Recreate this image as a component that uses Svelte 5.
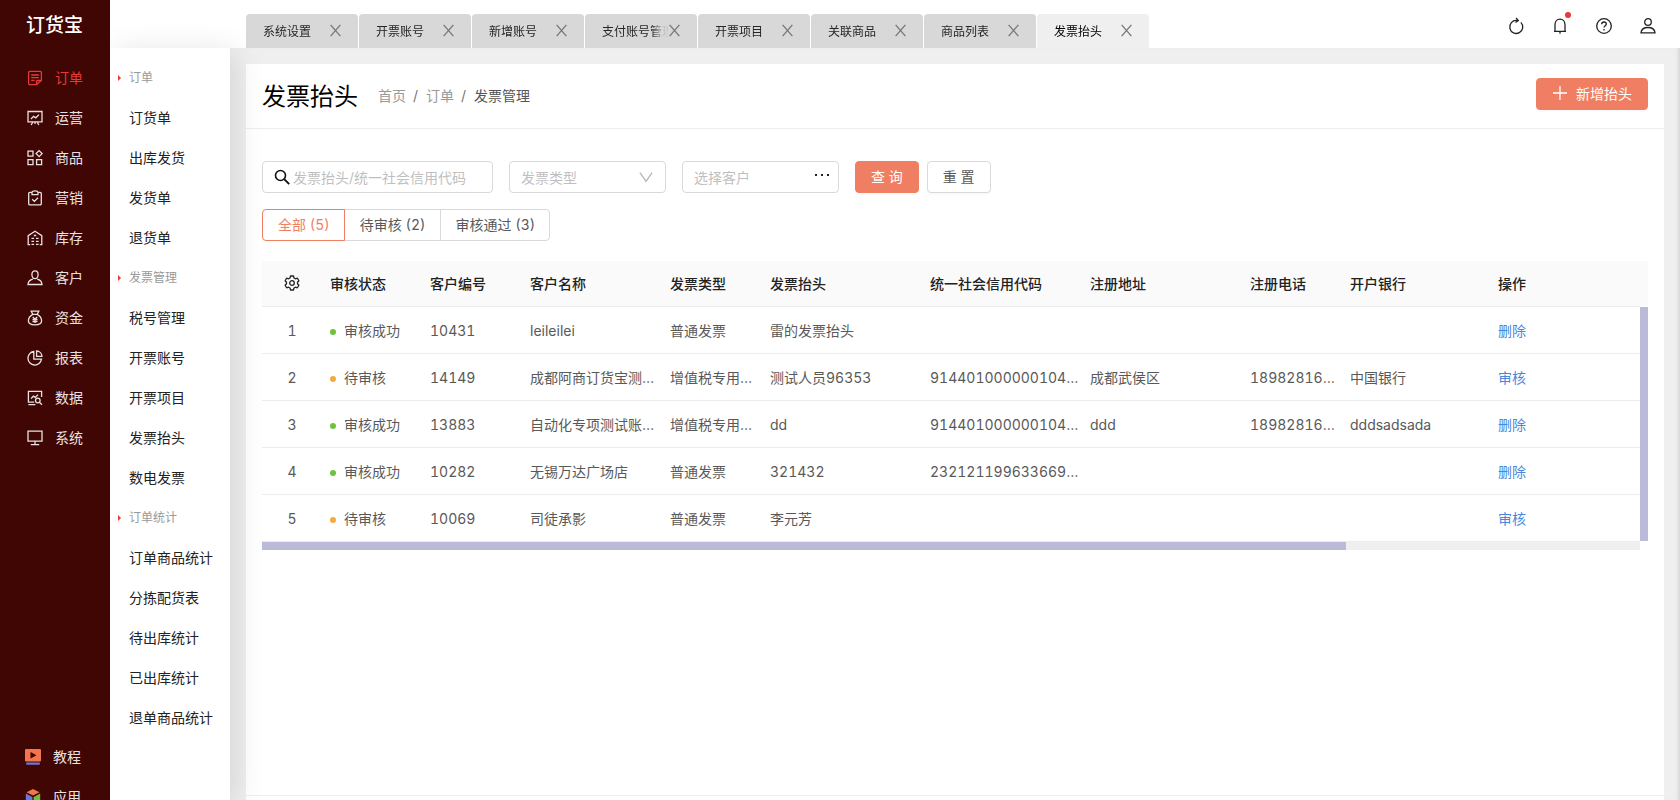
<script>
  const mainMenu = [
    { name: '订单', icon: 'order' },
    { name: '运营', icon: 'board' },
    { name: '商品', icon: 'goods' },
    { name: '营销', icon: 'clip' },
    { name: '库存', icon: 'stock' },
    { name: '客户', icon: 'user' },
    { name: '资金', icon: 'money' },
    { name: '报表', icon: 'pie' },
    { name: '数据', icon: 'data' },
    { name: '系统', icon: 'screen' }
  ]

  const subMenu = [
    { title: '订单', items: ['订货单', '出库发货', '发货单', '退货单'] },
    { title: '发票管理', items: ['税号管理', '开票账号', '开票项目', '发票抬头', '数电发票'] },
    { title: '订单统计', items: ['订单商品统计', '分拣配货表', '待出库统计', '已出库统计', '退单商品统计'] }
  ]

  let tabs = $state(['系统设置', '开票账号', '新增账号', '支付账号管理', '开票项目', '关联商品', '商品列表', '发票抬头'])
  let activeTab = $state('发票抬头')
  let activeMenu = $state('订单')
  let keyword = $state('')
  let type = $state('')
  let status = $state('all')

  const columns = ['审核状态', '客户编号', '客户名称', '发票类型', '发票抬头', '统一社会信用代码', '注册地址', '注册电话', '开户银行']

  const rows = [
    { done: true, cells: ['10431', 'leileilei', '普通发票', '雷的发票抬头', '', '', '', ''] },
    { done: false, cells: ['14149', '成都阿商订货宝测试店', '增值税专用发票', '测试人员96353', '914401000000104512', '成都武侯区', '18982816321', '中国银行'] },
    { done: true, cells: ['13883', '自动化专项测试账号一', '增值税专用发票', 'dd', '914401000000104512', 'ddd', '18982816321', 'dddsadsada'] },
    { done: true, cells: ['10282', '无锡万达广场店', '普通发票', '321432', '232121199633669852', '', '', ''] },
    { done: false, cells: ['10069', '司徒承影', '普通发票', '李元芳', '', '', '', ''] }
  ]

  const pending = rows.filter((r) => !r.done).length
  const filters = [
    { key: 'all', label: `全部 (${rows.length})` },
    { key: 'pending', label: `待审核 (${pending})` },
    { key: 'done', label: `审核通过 (${rows.length - pending})` }
  ]

  let visible = $derived(rows.filter((r) => status === 'all' || r.done === (status === 'done')))

  function closeTab(tab) {
    tabs = tabs.filter((t) => t !== tab)
  }

  function reset() {
    keyword = ''
    type = ''
  }
</script>

{#snippet icon(name)}
  <svg class="icon" viewBox="0 0 16 16" fill="none" stroke="currentColor" stroke-width="1.3" aria-hidden="true">
    {#if name === 'order'}
      <path d="M9.5 14.6H2.8a1.2 1.2 0 0 1-1.2-1.2V2.6a1.2 1.2 0 0 1 1.2-1.2h10.4a1.2 1.2 0 0 1 1.2 1.2v7.9zM9.5 14.6v-3a1.1 1.1 0 0 1 1.1-1.1h3.8M4.2 5h7.6M4.2 7.6h7.6M4.2 10.3h3.4" />
    {:else if name === 'board'}
      <path d="M1 1.5h14v10.3H1zM4 9l2.6-2.6 2.2 1.4L12 4.6M5.8 12l-1.6 3M10.2 12l1.6 3M8 12v2" />
    {:else if name === 'goods'}
      <path d="M1 1.2h5v5H1zM1 9.6h5v5H1zM9.6 9.6h5v5h-5zM12.1.6l3 3-3 3-3-3z" />
    {:else if name === 'clip'}
      <path d="M5 2.4H2.9a1.2 1.2 0 0 0-1.2 1.2v10.1a1.2 1.2 0 0 0 1.2 1.2h10.2a1.2 1.2 0 0 0 1.2-1.2V3.6a1.2 1.2 0 0 0-1.2-1.2H11M5 2.4C5.2 1.3 6.5.8 8 .8s2.8.5 3 1.6v2.2H5zM5.2 9.2l2.2 2.2L11 7.8" />
    {:else if name === 'stock'}
      <path d="M3.2 14.7h-2V5.6L8 1.2l6.8 4.4v9.1h-2M4.5 8.3h2.6M9 8.3h2.6M4.5 11.3h2.6M9 11.3h2.6M4.5 14.3h2.6M9 14.3h2.6M6.8 5.5h2.4" />
    {:else if name === 'user'}
      <path d="M8 .9c2 0 3.1 1.5 3.1 3.6S9.900 8.700 8 8.700 4.900 6.600 4.900 4.500 6 .9 8 .9zM5.800 9.200C3 9.900 1.200 11.600 1 14.500h14c-.2-2.900-2-4.600-4.800-5.300" />
    {:else if name === 'money'}
      <path d="M4.2 1.2h7.6l-1.6 3.2H5.8zM5.8 4.4C3 6 1.4 8.5 1.4 10.8c0 2.6 2 4.1 6.6 4.1s6.6-1.5 6.6-4.1c0-2.3-1.6-4.8-4.4-6.4M5.8 7L8 9.2 10.2 7M8 9.2v3.9M5.5 9.5h5M5.5 11.5h5" />
    {:else if name === 'pie'}
      <path d="M6.8 1.5a6.8 6.8 0 1 0 7.7 7.7H6.8zM9.6 1v5.4H15A5.6 5.6 0 0 0 9.6 1z" />
    {:else if name === 'data'}
      <path d="M14.6 7V1.4H1.4v10.8h5.8M1.4 14.7h7M4 8.6l2.4-2.4 1.8 1.2L11 4.6M10.8 8.2a2.3 2.3 0 1 1 0 4.6 2.3 2.3 0 0 1 0-4.6zM12.5 12.3l2.5 2.5" />
    {:else if name === 'screen'}
      <path d="M1 1.2h14v10H1zM8 11.2v3M3.8 14.6h8.4" />
    {:else if name === 'refresh'}
      <path d="M12.3 3.7A6.5 6.5 0 1 1 8 2.4h1.4M7 0l2.500 2.400L7 4.600" transform="rotate(8 8 8)" />
    {:else if name === 'bell'}
      <path d="M3 13.3V6.7C3 3.5 5.2 1.2 8 1.2s5 2.3 5 5.5v6.6M2 13.4h12M8 13.5v2.3" />
    {:else if name === 'help'}
      <circle cx="8" cy="8" r="7.3" />
      <path d="M5.7 6.3C5.7 4.9 6.7 4 8 4s2.3.9 2.3 2.1c0 1.7-2.3 1.7-2.3 3.5M8 11v1.4" />
    {:else if name === 'account'}
      <circle cx="8" cy="4" r="3.3" />
      <path d="M1 14.8c.3-3.7 3-5.3 7-5.3s6.700 1.600 7 5.300z" />
    {:else if name === 'search'}
      <circle cx="6.5" cy="6.5" r="5" stroke-width="1.6" />
      <path d="M10.2 10.2l5 5" stroke-width="1.9" />
    {:else if name === 'close'}
      <path d="M2 1l12 14M14 1L2 15" stroke-width="1.6" />
    {:else if name === 'down'}
      <path d="M1 3l7 10 7-10" stroke-width="1.5" />
    {:else if name === 'plus'}
      <path d="M8 1v14M1 8h14" />
    {:else if name === 'gear'}
      <path d="M6.5 1h3l.5 2 1.4.8 2-.6 1.5 2.6-1.4 1.5v1.4l1.4 1.5-1.5 2.6-2-.6-1.4.8-.5 2h-3l-.5-2-1.4-.8-2 .6-1.500-2.600 1.400-1.500V7.300L1.100 5.800l1.500-2.600 2 .6L6 3z" stroke-linejoin="round" />
      <circle cx="8" cy="8" r="2.3" />
    {/if}
  </svg>
{/snippet}

<div class="app">
  <aside class="sidebar">
    <div class="logo">订货宝</div>
    <nav class="main-menu">
      {#each mainMenu as item}
        <a href="#top" class:active={item.name === activeMenu} onclick={() => (activeMenu = item.name)}>
          {@render icon(item.icon)}
          <span>{item.name}</span>
        </a>
      {/each}
    </nav>
    <div class="main-menu extra">
      <a href="#top">
        <svg class="icon" viewBox="0 0 16 16" aria-hidden="true">
          <rect width="16" height="12.5" rx="1" fill="#f2754e" />
          <path d="M5.5 3l6 3.2-6 3.2z" fill="#3f0604" />
          <rect x="1" y="13.5" width="14" height="2.2" rx="1" fill="#6a78d8" />
        </svg>
        <span>教程</span>
      </a>
      <a href="#top">
        <svg class="icon" viewBox="0 0 16 16" aria-hidden="true">
          <path d="M8 0l6.5 3.3L8 6.6 1.5 3.3z" fill="#f2754e" />
          <path d="M.8 4.6l6.6 3.3V16L.8 12.5z" fill="#6a78d8" />
          <path d="M15.2 4.6L8.6 7.9V16l6.6-3.5z" fill="#6fbf3f" />
        </svg>
        <span>应用</span>
      </a>
    </div>
  </aside>

  <div class="right">
    <header class="topbar">
      <div class="tabs">
        {#each tabs as tab}
          <div class="tab" class:active={tab === activeTab}>
            <button class="tab-label" onclick={() => (activeTab = tab)}>{tab}</button>
            <button class="tab-close" aria-label="关闭" onclick={() => closeTab(tab)}>{@render icon('close')}</button>
          </div>
        {/each}
      </div>
      <div class="tools">
        <button aria-label="刷新">{@render icon('refresh')}</button>
        <button class="notice" aria-label="消息">{@render icon('bell')}</button>
        <button aria-label="帮助">{@render icon('help')}</button>
        <button aria-label="账户">{@render icon('account')}</button>
      </div>
    </header>

    <div class="body">
      <nav class="sub-menu">
        {#each subMenu as group}
          <div class="group-title">{group.title}</div>
          {#each group.items as item}
            <a href="#top">{item}</a>
          {/each}
        {/each}
      </nav>

      <main class="content">
        <div class="card">
          <div class="card-head">
            <h1>发票抬头</h1>
            <div class="crumbs">
              <a href="#top">首页</a><span>/</span><a href="#top">订单</a><span>/</span><b>发票管理</b>
            </div>
            <button class="btn primary add">{@render icon('plus')}新增抬头</button>
          </div>

          <div class="card-body">
            <div class="search-row">
              <label class="field wide">
                {@render icon('search')}
                <input type="text" bind:value={keyword} placeholder="发票抬头/统一社会信用代码" aria-label="关键字" />
              </label>
              <label class="field">
                <select bind:value={type} aria-label="发票类型">
                  <option value="">发票类型</option>
                  <option value="normal">普通发票</option>
                  <option value="vat">增值税专用发票</option>
                </select>
                {@render icon('down')}
              </label>
              <div class="field client">
                <input type="text" placeholder="选择客户" aria-label="选择客户" />
                <button class="more" aria-label="更多">
                  <svg viewBox="0 0 14 2" aria-hidden="true"><path d="M0 0h2v2H0zM6 0h2v2H6zM12 0h2v2h-2z" /></svg>
                </button>
              </div>
              <div class="search-actions">
                <button class="btn primary">查 询</button>
                <button class="btn" onclick={reset}>重 置</button>
              </div>
            </div>

            <div class="status-row">
              {#each filters as f}
                <button class:active={status === f.key} onclick={() => (status = f.key)}>{f.label}</button>
              {/each}
            </div>

            <div class="table-box">
              <table>
                <colgroup>
                  <col class="w60" />
                  <col class="w100" />
                  <col class="w100" />
                  <col class="w140" />
                  <col class="w100" />
                  <col class="w160" />
                  <col class="w160" />
                  <col class="w160" />
                  <col class="w100" />
                  <col />
                  <col class="w150" />
                </colgroup>
                <thead>
                  <tr>
                    <th class="center">{@render icon('gear')}</th>
                    {#each columns as col}
                      <th>{col}</th>
                    {/each}
                    <th>操作</th>
                  </tr>
                </thead>
                <tbody>
                  {#each visible as row, i}
                    <tr>
                      <td class="center">{i + 1}</td>
                      <td><span class="dot" class:done={row.done}></span>{row.done ? '审核成功' : '待审核'}</td>
                      {#each row.cells as cell}
                        <td>{cell}</td>
                      {/each}
                      <td><a href="#top">{row.done ? '删除' : '审核'}</a></td>
                    </tr>
                  {/each}
                </tbody>
              </table>
              <div class="scroll-y"></div>
              <div class="scroll-x"><div class="thumb"></div></div>
            </div>
          </div>

          <div class="card-foot"></div>
        </div>
      </main>
    </div>
  </div>
</div>

<style>
  :global(body) {
    margin: 0;
    background: #efefef;
  }

  .app {
    display: flex;
    height: 100vh;
    overflow: hidden;
    font-family: Inter, "Noto Sans CJK SC", sans-serif;
    font-size: 14px;
    font-variant-numeric: tabular-nums;
    color: #595959;
  }

  .app * {
    box-sizing: border-box;
  }

  a {
    color: inherit;
    text-decoration: none;
  }

  button,
  input,
  select {
    font: inherit;
    color: inherit;
    margin: 0;
    padding: 0;
    border: 0;
    background: none;
    outline: none;
  }

  button {
    cursor: pointer;
  }

  .icon {
    display: block;
    width: 16px;
    height: 16px;
    flex: none;
    overflow: visible;
  }

  .sidebar {
    position: relative;
    z-index: 2;
    width: 110px;
    flex: none;
    display: flex;
    flex-direction: column;
    background: #3f0604;
    color: #eae2e2;
  }

  .logo {
    height: 58px;
    padding-left: 26px;
    font-size: 19px;
    font-weight: 500;
    line-height: 52px;
    color: #ffffff;
  }

  .main-menu a {
    display: flex;
    align-items: center;
    gap: 12px;
    height: 40px;
    padding-left: 27px;
  }

  .main-menu span {
    padding-bottom: 2px;
  }

  .main-menu a.active {
    color: #e63a35;
  }

  .main-menu.extra {
    margin-top: auto;
    margin-bottom: -17px;
  }

  .main-menu.extra a {
    padding-left: 25px;
  }

  .right {
    flex: 1;
    min-width: 0;
    display: flex;
    flex-direction: column;
  }

  .topbar {
    height: 48px;
    flex: none;
    display: flex;
    align-items: flex-end;
    justify-content: space-between;
    padding: 0 24px 0 136px;
    background: #ffffff;
  }

  .tabs {
    display: flex;
    gap: 1px;
  }

  .tab {
    width: 112px;
    height: 34px;
    display: flex;
    align-items: center;
    padding: 0 0 2px 17px;
    border-radius: 4px 4px 0 0;
    background: #d8d8d8;
    font-size: 12px;
    color: #262626;
  }

  .tab.active {
    background: #efefef;
    color: #000000;
  }

  .tab-label {
    width: 66px;
    overflow: hidden;
    white-space: nowrap;
    text-align: left;
    mask-image: linear-gradient(to right, #000 50px, rgba(0, 0, 0, 0.15) 60px, transparent 72px);
  }

  .tab-close .icon {
    width: 13px;
    height: 13px;
    color: #777777;
  }

  .tools {
    height: 48px;
    display: flex;
    align-items: center;
    gap: 28px;
    padding-top: 4px;
    color: #222222;
  }

  .notice {
    position: relative;
  }

  .notice::after {
    content: '';
    position: absolute;
    top: -6px;
    right: -3px;
    width: 6px;
    height: 6px;
    border-radius: 50%;
    background: #e63a35;
  }

  .body {
    flex: 1;
    min-height: 0;
    display: flex;
  }

  .sub-menu {
    position: relative;
    width: 120px;
    flex: none;
    padding-top: 10px;
    background: #ffffff;
    color: #222222;
    box-shadow: 4px 4px 30px rgba(0, 0, 0, 0.12);
  }

  .sub-menu a,
  .group-title {
    display: block;
    height: 40px;
    line-height: 40px;
    padding-left: 19px;
    white-space: nowrap;
  }

  .group-title {
    display: flex;
    align-items: center;
    gap: 8px;
    padding-left: 8px;
    font-size: 12px;
    color: #999999;
  }

  .group-title::before {
    content: '';
    border: 3px solid transparent;
    border-left-color: #e63a35;
    border-right-width: 0;
  }

  .content {
    flex: 1;
    min-width: 0;
    display: flex;
    padding: 16px 16px 0;
    background: #efefef;
    box-shadow: inset -4px 0 4px -3px rgba(0, 0, 0, 0.15);
  }

  .card {
    flex: 1;
    min-width: 0;
    display: flex;
    flex-direction: column;
    background: #ffffff;
  }

  .card-head {
    height: 65px;
    flex: none;
    display: flex;
    align-items: center;
    padding: 0 16px 2px;
    border-bottom: 1px solid #eeeeee;
  }

  h1 {
    margin: 0 20px 2px 0;
    font-size: 24px;
    font-weight: 400;
    color: #000000;
  }

  .crumbs {
    color: #999999;
  }

  .crumbs span {
    margin: 0 8px 0 7px;
    color: #777777;
  }

  .crumbs b {
    font-weight: 400;
    color: #555555;
  }

  .btn {
    height: 32px;
    padding: 0 15px 2px;
    border: 1px solid #d9d9d9;
    border-radius: 4px;
    background: #ffffff;
    box-shadow: 0 2px 0 rgba(0, 0, 0, 0.02);
  }

  .btn.primary {
    border-color: #f07e62;
    background: #f07e62;
    color: #ffffff;
  }

  .btn.add {
    display: flex;
    align-items: center;
    gap: 8px;
    margin: 0 0 2px auto;
  }

  .card-body {
    flex: 1;
    padding: 32px 16px 0;
  }

  .search-row {
    display: flex;
    gap: 16px;
  }

  .field {
    display: flex;
    align-items: center;
    width: 157px;
    height: 32px;
    padding: 0 12px 0 11px;
    border: 1px solid #d9d9d9;
    border-radius: 4px;
  }

  .field.wide {
    width: 231px;
    gap: 3px;
    color: #111111;
  }

  .field.client {
    padding-right: 9px;
  }

  .field input,
  .field select {
    flex: 1;
    min-width: 0;
    height: 28px;
  }

  .field input::placeholder {
    color: #bfbfbf;
    opacity: 1;
  }

  .field select {
    appearance: none;
    color: #bfbfbf;
  }

  .field select + .icon {
    width: 14px;
    height: 14px;
    color: #b5b5b5;
  }

  .more {
    padding-bottom: 8px;
    line-height: 0;
  }

  .more svg {
    width: 14px;
    height: 2px;
    fill: #222222;
  }

  .search-actions {
    display: flex;
    gap: 8px;
  }

  .status-row {
    display: flex;
    margin: 16px 0 20px;
  }

  .status-row button {
    height: 32px;
    margin-left: -1px;
    padding: 0 14px 2px 15px;
    border: 1px solid #d9d9d9;
  }

  .status-row button:first-child {
    margin-left: 0;
    border-radius: 4px 0 0 4px;
  }

  .status-row button:last-child {
    border-radius: 0 4px 4px 0;
  }

  .status-row button.active {
    position: relative;
    border-color: #f07e62;
    color: #f07e62;
  }

  .table-box {
    display: grid;
    grid-template-columns: 1fr 8px;
    grid-template-rows: auto 8px;
    background: linear-gradient(#fafafa, #fafafa) no-repeat 0 0 / 100% 45px;
  }

  table {
    width: 100%;
    table-layout: fixed;
    border-collapse: separate;
    border-spacing: 0;
  }

  .w60 {
    width: 60px;
  }

  .w100 {
    width: 100px;
  }

  .w140 {
    width: 140px;
  }

  .w150 {
    width: 150px;
  }

  .w160 {
    width: 160px;
  }

  th,
  td {
    height: 47px;
    padding: 0 2px 0 8px;
    border-bottom: 1px solid #ececec;
    text-align: left;
    overflow: hidden;
    white-space: nowrap;
    text-overflow: ellipsis;
  }

  th {
    height: 46px;
    padding-bottom: 2px;
    font-weight: 500;
    color: #222222;
  }

  th.center,
  td.center {
    padding-right: 8px;
    text-align: center;
  }

  .center .icon {
    margin: 0 auto;
  }

  td a {
    color: #4a86dc;
  }

  .dot {
    display: inline-block;
    width: 6px;
    height: 6px;
    margin-right: 8px;
    border-radius: 50%;
    background: #f0ad3c;
    vertical-align: 1px;
  }

  .dot.done {
    background: #6fc23c;
  }

  .scroll-y {
    margin: 46px 0 1px;
    background: #bbbbd9;
  }

  .scroll-x {
    background: #efefef;
  }

  .thumb {
    width: 78.7%;
    height: 8px;
    background: #bbbbd9;
  }

  .card-foot {
    height: 5px;
    border-top: 1px solid #eeeeee;
  }
</style>
